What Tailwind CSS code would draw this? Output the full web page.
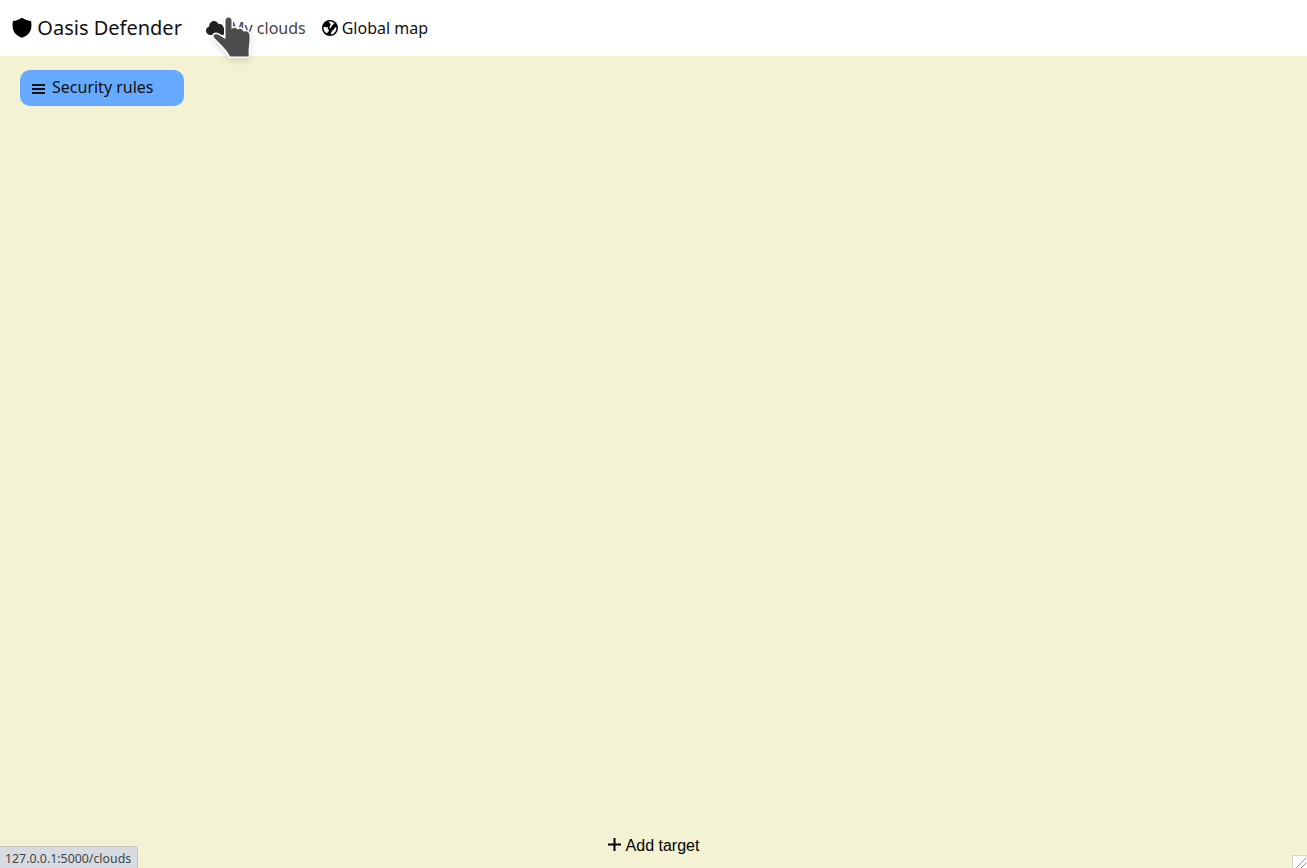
<!DOCTYPE html>
<html lang="en"><head><meta charset="utf-8"><title>Oasis Defender</title>
<script src="https://cdn.jsdelivr.net/npm/@tailwindcss/browser@4"></script></head>
<body class="h-screen flex flex-col overflow-hidden bg-[#f3f2d3] font-['Noto_Sans',sans-serif] text-base text-[#111]">
<header class="relative h-14 shrink-0 bg-white flex items-center pl-3">
  <a class="flex items-center text-xl leading-[30px] whitespace-nowrap w-[194px]">
    <svg class="w-5 h-5 mr-[5.3px]" viewBox="0 0 20 20"><path d="M10 -.5C12.5 1.5 15.8 2.8 19 3C20.5 10.4 18.6 16.8 10 19.8C1.4 16.8-.5 10.4 1 3C4.2 2.8 7.5 1.5 10 -.5Z" fill="#000"/></svg>Oasis Defender</a>
  <nav class="flex items-center whitespace-nowrap">
    <a class="flex items-center w-[115.7px] text-[#444]"><svg class="w-5 h-4 mr-1 text-[#222]" viewBox="0 0 20 16" fill="currentColor"><path d="M4 15C1.5 15 0 12.8 0 10.6C0 8.6 1.2 7.2 3 6.8C3.1 3.5 5.2 1 8 1C10.2 1 11.8 2.6 12.7 4.2C15.2 3.7 17.2 5.2 17.4 7.4C19 7.8 20 9.2 20 10.8C20 13 18.5 15 16.4 15Z"/></svg>My clouds</a>
    <a class="flex items-center"><svg class="w-4 h-4 mr-1" viewBox="0 0 16 16"><circle cx="8" cy="8" r="8" fill="#000"/><path d="M1.3 7.5L3 6.8L4.6 7.5L6.3 6.8L5.6 8.8L7 10L6.3 12L4.5 13.2L2.3 11.2ZM6.5 1.6L9.5 1.4L12.3 3L11.2 4.5L9.8 5.8L8.8 8L7.4 8.3L7.9 6L8.8 4.5ZM13.2 7L14.6 8L13.8 11L11.8 13.4L9.2 14.4L9 12.8L10.2 10.8L11.8 9.6Z" fill="#fff"/></svg>Global map</a>
  </nav>
  <svg class="absolute left-[208px] top-[12px] w-[48px] h-[52px] drop-shadow-md" viewBox="208 12 48 52"><path d="M225.5 21Q225.5 17.5 228.5 17.5Q231.5 17.5 231.5 21V29Q235.5 26.5 237.5 29.5Q242 27.5 243.5 31.5Q249 30 249.5 35.5C250 43 248 47 248.8 56.5H230C228 51 221 45 214 37.5C212.5 34.5 215 33.5 218 34.5L225.5 39Z" fill="#4d4d4d" stroke="#fff" stroke-width="3" paint-order="stroke" stroke-linejoin="round"/></svg>
</header>
<main class="flex-1 flex flex-col items-start">
  <button class="mt-[14px] ml-5 w-[164px] h-9 rounded-[10px] bg-[#66aaff] flex items-center pl-3 pb-0.5 whitespace-nowrap"><svg class="w-[14px] h-4 mr-[6px] mt-0.5" viewBox="0 0 14 16"><path d="M0 5H13M0 9H13M0 13H13" stroke="#111" stroke-width="2"/></svg>Security rules</button>
  <button class="mt-auto mb-[10px] self-center flex items-center font-['Liberation_Sans',sans-serif] text-black"><svg class="w-[14px] h-[14px] mr-1 mb-0.5" viewBox="0 0 14 14"><path d="M6.5 0V13M0 6.5H13" stroke="#000" stroke-width="2"/></svg>Add target</button>
</main>
<div class="absolute left-0 bottom-0 w-[138px] h-[22px] rounded-tr-[4px] border-t border-r border-[#c5c5b8] bg-[#d7dbe2] pl-[5px] pt-px text-[12.35px] leading-[21px] text-[#444] whitespace-nowrap">127.0.0.1:5000/clouds</div>
<svg class="absolute right-0 bottom-0 w-[15px] h-[13px]" viewBox="0 0 15 13"><path d="M0 0H15V13H0Z" fill="#fff"/><path d="M0 .5H15M.5 0V13" stroke="#d4d4d4"/><path d="M4 13L14 3M9 13L14 8" stroke="#999"/></svg>
</body></html>
